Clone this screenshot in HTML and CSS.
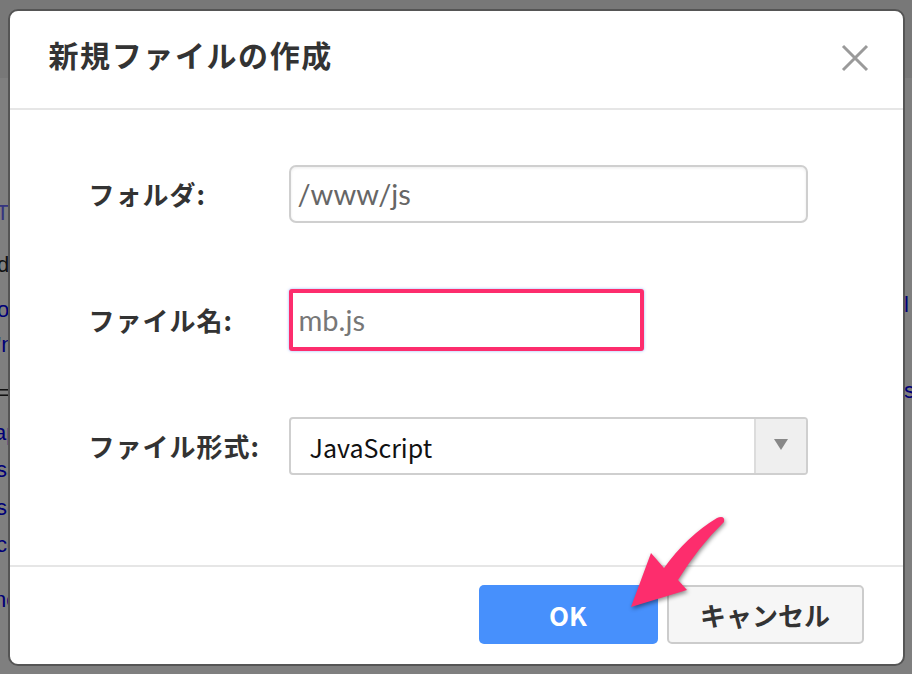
FILE: index.html
```html
<!DOCTYPE html>
<html lang="ja">
<head>
<meta charset="utf-8">
<title>新規ファイルの作成</title>
<link rel="stylesheet" href="styles.css">
</head>
<body>
<div class="page">
  <div class="page-header"></div>
  <div class="page-lines">
    <p class="ln l1 link">Tiles</p>
    <p class="ln l2">data</p>
    <p class="ln l3 link">open</p>
    <p class="ln l4 link">'name'</p>
    <p class="ln l5">= value</p>
    <p class="ln l6 link">app</p>
    <p class="ln l7 link">save</p>
    <p class="ln l8 link">send</p>
    <p class="ln l9 link">copy</p>
    <p class="ln l10 link">new</p>
  </div>
  <div class="page-right">
    <p class="rn r1 link">l</p>
    <p class="rn r2 link">s</p>
  </div>
</div>

<div class="overlay">
  <div class="dialog">
    <div class="dialog-header">
      <h1 class="title">新規ファイルの作成</h1>
      <svg class="close" width="28" height="28" viewBox="0 0 28 28" aria-label="閉じる">
        <path d="M2 2 L26 26 M26 2 L2 26" stroke="#9a9a9a" stroke-width="3" fill="none"/>
      </svg>
    </div>

    <div class="dialog-body">
      <div class="row">
        <label class="label">フォルダ:</label>
        <div class="field">
          <div class="input input-folder">/www/js</div>
        </div>
      </div>
      <div class="row">
        <label class="label">ファイル名:</label>
        <div class="field">
          <div class="input input-name">mb.js</div>
        </div>
      </div>
      <div class="row">
        <label class="label">ファイル形式:</label>
        <div class="field">
          <div class="select">
            <span class="select-value">JavaScript</span>
            <span class="select-btn"><span class="tri"></span></span>
          </div>
        </div>
      </div>
    </div>

    <div class="dialog-footer">
      <button class="btn btn-ok">OK</button>
      <button class="btn btn-cancel">キャンセル</button>
    </div>

    <svg class="pointer" width="120" height="110" viewBox="0 0 120 110">
      <path d="M104 3 Q108 3 107 8 Q82 32 61 66 L70 76 L14 93 L34 39 L47 54 Q70 22 100 4 Q102 3 104 3 Z" fill="#fd2d6d"/>
    </svg>
  </div>
</div>
</body>
</html>
```

FILE: styles.css
```css
* { box-sizing: border-box; }

html, body {
  margin: 0;
  padding: 0;
  width: 912px;
  height: 674px;
  overflow: hidden;
}

body {
  background: #ffffff;
  font-family: "Noto Sans CJK JP", "Noto Sans", sans-serif;
  position: relative;
}

.page {
  width: 912px;
  height: 674px;
}

.page-header {
  height: 78px;
  background: #f0f0f0;
}

.page-lines {
  font-family: "Liberation Sans", sans-serif;
  font-size: 22px;
  color: #222;
  padding-left: 0;
}

.ln {
  margin: 0;
  line-height: 26px;
  height: 26px;
  white-space: nowrap;
}

.link { color: #0000ee; }

.l1 { margin-top: 122px; margin-left: -4px; color: #6a6aff; }
.l2 { margin-top: 26px; margin-left: -3px; }
.l3 { margin-top: 19px; margin-left: -3px; }
.l4 { margin-top: 9px; margin-left: -3px; }
.l5 { margin-top: 22px; margin-left: -2px; }
.l6 { margin-top: 14px; margin-left: -6px; }
.l7 { margin-top: 11px; margin-left: -4px; }
.l8 { margin-top: 12px; margin-left: -4px; }
.l9 { margin-top: 11px; margin-left: -4px; }
.l10 { margin-top: 29px; margin-left: -6px; }

.page-right {
  position: absolute;
  top: 0;
  right: 0;
  width: 8px;
  font-family: "Liberation Sans", sans-serif;
  font-size: 22px;
}

.rn { margin: 0; line-height: 26px; }
.r1 { margin-top: 292px; }
.r2 { margin-top: 60px; }

/* overlay + dialog */
.overlay {
  position: absolute;
  inset: 0;
  background: rgba(0, 0, 0, 0.5);
  display: flex;
  align-items: center;
  justify-content: center;
}

.dialog {
  position: relative;
  width: 897px;
  height: 657px;
  background: #fff;
  border: 2px solid #555;
  border-radius: 10px;
  display: flex;
  flex-direction: column;
}

.dialog-header {
  height: 99px;
  flex: none;
  display: flex;
  align-items: center;
  justify-content: space-between;
  padding: 0 34px 10px 39px;
  border-bottom: 2px solid #e6e6e6;
}

.title {
  margin: 0;
  font-size: 30px;
  font-weight: 700;
  color: #333;
  letter-spacing: 1.6px;
}

.close { display: block; margin-top: 8px; }

.dialog-body {
  flex: 1;
  padding-top: 21px;
}

.row {
  height: 126px;
  display: grid;
  grid-template-columns: 200px 1fr;
  align-items: center;
  padding-left: 79px;
}

.label {
  font-size: 26px;
  font-weight: 700;
  color: #333;
  letter-spacing: 1px;
}

.field { display: flex; }

.input {
  height: 58px;
  display: flex;
  align-items: center;
  font-family: "Lato", "Noto Sans", sans-serif;
  font-size: 29px;
  color: #666;
  background: #fff;
}

.input-folder {
  width: 519px;
  border: 2px solid #cfcfcf;
  border-radius: 7px;
  padding-left: 7px;
  box-shadow: inset 0 1px 3px rgba(0, 0, 0, 0.08);
}

.input-name {
  width: 355px;
  height: 62px;
  border: 4px solid #fd2d6d;
  border-radius: 3px;
  padding-left: 6px;
  color: #777;
  box-shadow: 0 0 3px rgba(80, 140, 255, 0.6);
}

.select {
  width: 519px;
  height: 58px;
  border: 2px solid #cfcfcf;
  border-radius: 4px;
  display: flex;
  overflow: hidden;
}

.select-value {
  flex: 1;
  display: flex;
  align-items: center;
  padding-left: 19px;
  font-size: 25px;
  color: #111;
  padding-top: 2px;
}

.select-btn {
  width: 52px;
  border-left: 2px solid #dcdcdc;
  background: #efefef;
  display: flex;
  align-items: center;
  justify-content: center;
}

.tri {
  width: 0;
  height: 0;
  border-left: 7px solid transparent;
  border-right: 7px solid transparent;
  border-top: 11px solid #888;
  margin-bottom: 2px;
}

.dialog-footer {
  flex: none;
  height: 99px;
  border-top: 2px solid #e6e6e6;
  display: flex;
  justify-content: flex-end;
  align-items: flex-start;
  gap: 9px;
  padding: 18px 39px 0 0;
}

.btn {
  height: 59px;
  border-radius: 5px;
  font-family: "Noto Sans CJK JP", sans-serif;
  font-size: 26px;
  font-weight: 700;
  cursor: pointer;
  padding: 0;
}

.btn-ok {
  width: 179px;
  background: #4790fc;
  border: none;
  color: #fff;
}

.btn-cancel {
  width: 197px;
  background: #f6f6f6;
  border: 2px solid #cccccc;
  color: #333;
}

.pointer {
  position: absolute;
  left: 607px;
  top: 503px;
  filter: drop-shadow(1px 2px 2px rgba(0, 0, 0, 0.45));
}
```
